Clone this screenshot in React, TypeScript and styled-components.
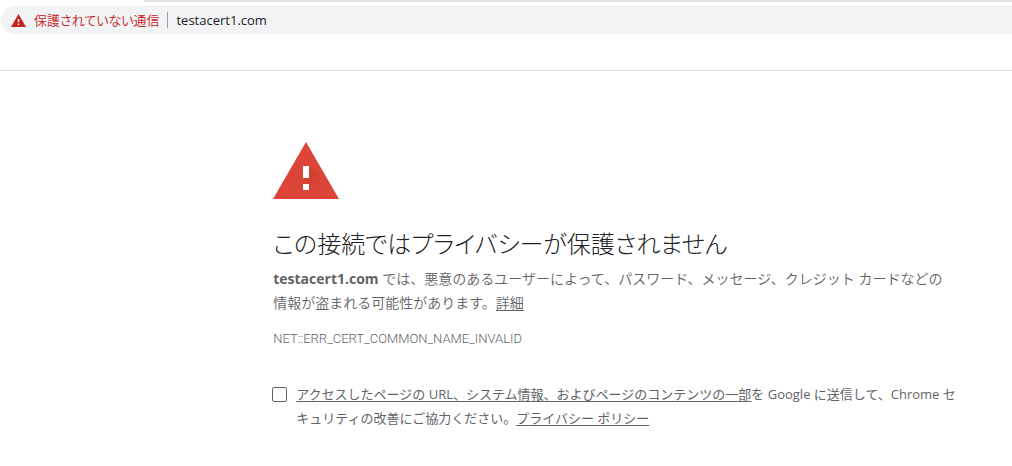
import React from "react";
import styled, { createGlobalStyle } from "styled-components";

const GlobalStyle = createGlobalStyle`
  * { box-sizing: border-box; }
  body {
    margin: 0;
    background: #fff;
    color: #5f6368;
    font-family: "Open Sans", "Noto Sans CJK JP", sans-serif;
  }
`;

const TabStrip = styled.div`
  height: 2px;
  margin-left: 144px;
  background: #dee1e6;
  border-bottom-left-radius: 2px;
`;

const Toolbar = styled.header`
  padding: 4px 0 36px 1px;
  border-bottom: 1px solid #d9d9d9;
`;

const AddressBar = styled.div`
  display: flex;
  align-items: center;
  height: 28px;
  padding-left: 10px;
  border-radius: 14px 0 0 14px;
  background: #f1f3f4;
  font-size: 13px;
  line-height: 20px;
`;

const SecurityButton = styled.button`
  display: flex;
  align-items: center;
  gap: 8px;
  padding: 0 8px 0 0;
  border: 0;
  border-right: 1px solid #9aa0a6;
  background: none;
  color: #c5221f;
  font: inherit;
  font-family: "Noto Sans CJK JP", sans-serif;
  font-weight: 350;
  font-feature-settings: "palt";
  line-height: 16px;
  white-space: nowrap;
`;

const UrlInput = styled.input`
  flex: 1;
  min-width: 0;
  padding: 0 8px;
  border: 0;
  outline: 0;
  background: none;
  color: #202124;
  font: inherit;
`;

const Main = styled.main`
  width: 68%;
  min-width: 688px;
  margin-left: 27%;
  padding-top: 71px;
`;

const WarningArt = styled.svg`
  display: block;
  width: 66px;
  height: 57px;
`;

const Title = styled.h1`
  margin: 29px 0 7px;
  color: #202124;
  font-size: 24px;
  font-weight: 300;
  font-feature-settings: "palt";
  line-height: 32px;
`;

const Message = styled.p`
  margin: 0;
  font-size: 14px;
  font-weight: 350;
  line-height: 24px;
`;

const ErrorCode = styled.p`
  margin: 14px 0 0;
  font-family: Roboto, sans-serif;
  font-size: 13px;
  font-weight: 300;
  line-height: 20px;
`;

const TextLink = styled.a`
  color: inherit;
  text-decoration: underline;
  text-underline-offset: 2px;
`;

const OptIn = styled.div`
  display: flex;
  align-items: flex-start;
  gap: 9px;
  margin-top: 33px;
  font-size: 13px;
  line-height: 24px;
`;

const Checkbox = styled.input`
  appearance: none;
  flex: none;
  width: 15px;
  height: 15px;
  margin: 5px 0 0 -1px;
  border: 1px solid #5f6368;
  border-radius: 2px;
  background: #fff;
`;

export default function App() {
  return (
    <>
      <GlobalStyle />
      <TabStrip />
      <Toolbar>
        <AddressBar>
          <SecurityButton type="button">
            <svg width="15" height="13" viewBox="0 0 15 13" aria-hidden="true">
              <path d="M7.5 0 15 13H0Z" fill="#c5221f" />
              <path d="M6.7 5h1.6v3H6.7zM6.7 9.4h1.6V11H6.7z" fill="#f1f3f4" />
            </svg>
            保護されていない通信
          </SecurityButton>
          <UrlInput type="text" aria-label="アドレス" defaultValue="testacert1.com" />
        </AddressBar>
      </Toolbar>
      <Main>
        <WarningArt viewBox="0 0 66 57" aria-hidden="true">
          <defs>
            <linearGradient id="shade" gradientUnits="userSpaceOnUse" x1="32" y1="28" x2="48" y2="44">
              <stop offset="0" stopColor="#b93a2f" stopOpacity="0.8" />
              <stop offset="1" stopColor="#db4437" stopOpacity="0" />
            </linearGradient>
          </defs>
          <path d="M33 0 66 57H0Z" fill="#db4437" />
          <path d="M36 24 55 43V57H39L30 48 36 42 30 36Z" fill="url(#shade)" />
          <path d="M30 24h6v12h-6zM30 42h6v6h-6z" fill="#fff" />
        </WarningArt>
        <Title>この接続ではプライバシーが保護されません</Title>
        <Message>
          <strong>testacert1.com</strong> では、悪意のあるユーザーによって、パスワード、メッセージ、クレジット カードなどの
          <br />
          情報が盗まれる可能性があります。<TextLink href="#details">詳細</TextLink>
        </Message>
        <ErrorCode>NET::ERR_CERT_COMMON_NAME_INVALID</ErrorCode>
        <OptIn>
          <Checkbox type="checkbox" id="opt-in" />
          <label htmlFor="opt-in">
            <TextLink href="#report">アクセスしたページの URL、システム情報、およびページのコンテンツの一部</TextLink>を Google に送信して、Chrome セ
            <br />
            キュリティの改善にご協力ください。<TextLink href="#privacy">プライバシー ポリシー</TextLink>
          </label>
        </OptIn>
      </Main>
    </>
  );
}
